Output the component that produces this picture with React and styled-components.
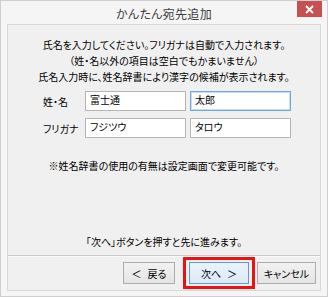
import React from 'react';
import styled, { createGlobalStyle } from 'styled-components';

const GlobalStyle = createGlobalStyle`
  html, body {
    margin: 0;
    padding: 0;
    background: #ffffff;
  }
  body {
    font-family: "Noto Sans CJK JP", "Noto Sans", sans-serif;
  }
`;

const JP = `"Noto Sans CJK JP", "Noto Sans", sans-serif`;

// ダイアログ外枠
const Window = styled.div`
  width: 328px;
  height: 297px;
  box-sizing: border-box;
  border: 1px solid #cfcfcf;
  background: #f5f5f5;
  display: flex;
  flex-direction: column;
  padding: 0 6px 5px 6px;
  font-family: ${JP};
  font-feature-settings: "palt";
`;

const TitleBar = styled.div`
  height: 23px;
  display: grid;
  grid-template-columns: 1fr auto 1fr;
  align-items: start;
`;

const Title = styled.div`
  grid-column: 2;
  font-size: 12px;
  line-height: 25px;
  color: #3c3c3c;
  letter-spacing: 0.3px;
`;

const CloseButton = styled.div`
  grid-column: 3;
  justify-self: end;
  margin-right: -1px;
  width: 25px;
  height: 16px;
  background: #c75050;
  color: #fff;
  display: flex;
  align-items: center;
  justify-content: center;
`;

// クライアント領域
const Panel = styled.div`
  flex: 1;
  border: 1px solid #d8d8d8;
  background: #f0f0f0;
  display: flex;
  flex-direction: column;
`;

const Text = styled.div`
  text-align: center;
  font-size: 10px;
  line-height: 16px;
  color: #000;
`;

const Intro = styled(Text)`
  padding-top: 12px;
`;

const Form = styled.div`
  margin-top: 6px;
  padding-left: 34px;
  display: grid;
  grid-template-columns: 39px 101px 101px;
  column-gap: 4px;
  row-gap: 7px;
  align-items: center;
`;

const Label = styled.div`
  font-size: 10px;
  color: #000;
  white-space: nowrap;
  padding-left: 1px;
`;

const Field = styled.div`
  height: 20px;
  box-sizing: border-box;
  border: 1px solid ${p => (p.focused ? '#6fa6df' : '#b4b4b4')};
  background: #fff;
  font-size: 10px;
  line-height: 14px;
  padding: 1px 0 0 4px;
  color: #000;
  ${p => p.focused && 'box-shadow: inset 0 0 0 1px #c8def5;'}
`;

const Note = styled(Text)`
  margin-top: 20px;
`;

const Spacer = styled.div`
  flex: 1;
`;

const Hint = styled(Text)`
  margin-bottom: 5px;
`;

const Separator = styled.div`
  height: 1px;
  background: #c9c9c9;
  border-bottom: 1px solid #fafafa;
`;

const ButtonRow = styled.div`
  display: flex;
  justify-content: flex-end;
  align-items: center;
  padding: 5px 4px 6px 0;
`;

const Button = styled.div`
  width: ${p => p.w}px;
  height: 22px;
  box-sizing: border-box;
  border: 1px solid ${p => (p.primary ? '#5b9bd8' : '#adadad')};
  background: ${p => (p.primary ? 'linear-gradient(#eaf3fc, #dde9f5)' : 'linear-gradient(#f2f2f2, #e4e4e4)')};
  display: flex;
  align-items: center;
  justify-content: center;
  font-size: 10px;
  color: #000;
  gap: 6px;
`;

// 注目枠（スクリーンショット上の赤い囲み）
const Highlight = styled.div`
  position: relative;
  margin: 0 8px 0 14px;
  &::after {
    content: '';
    position: absolute;
    left: -6px;
    right: -6px;
    top: -5px;
    bottom: -5px;
    border: 3px solid #ee1111;
  }
`;

const App = () => (
  <>
    <GlobalStyle />
    <Window>
      <TitleBar>
        <Title>かんたん宛先追加</Title>
        <CloseButton>
          <svg width="9" height="9" viewBox="0 0 9 9">
            <path d="M1 1 L8 8 M8 1 L1 8" stroke="#fff" strokeWidth="1.8" />
          </svg>
        </CloseButton>
      </TitleBar>
      <Panel>
        <Intro>
          氏名を入力してください。フリガナは自動で入力されます。
          <br />
          （姓・名以外の項目は空白でもかまいません）
          <br />
          氏名入力時に、姓名辞書により漢字の候補が表示されます。
        </Intro>
        <Form>
          <Label>姓・名</Label>
          <Field>富士通</Field>
          <Field focused>太郎</Field>
          <Label>フリガナ</Label>
          <Field>フジツウ</Field>
          <Field>タロウ</Field>
        </Form>
        <Note>※姓名辞書の使用の有無は設定画面で変更可能です。</Note>
        <Spacer />
        <Hint>「次へ」ボタンを押すと先に進みます。</Hint>
        <Separator />
        <ButtonRow>
          <Button w={52}>
            <span>＜</span>
            <span>戻る</span>
          </Button>
          <Highlight>
            <Button w={60} primary>
              <span>次へ</span>
              <span>＞</span>
            </Button>
          </Highlight>
          <Button w={59}>キャンセル</Button>
        </ButtonRow>
      </Panel>
    </Window>
  </>
);

export default App;
